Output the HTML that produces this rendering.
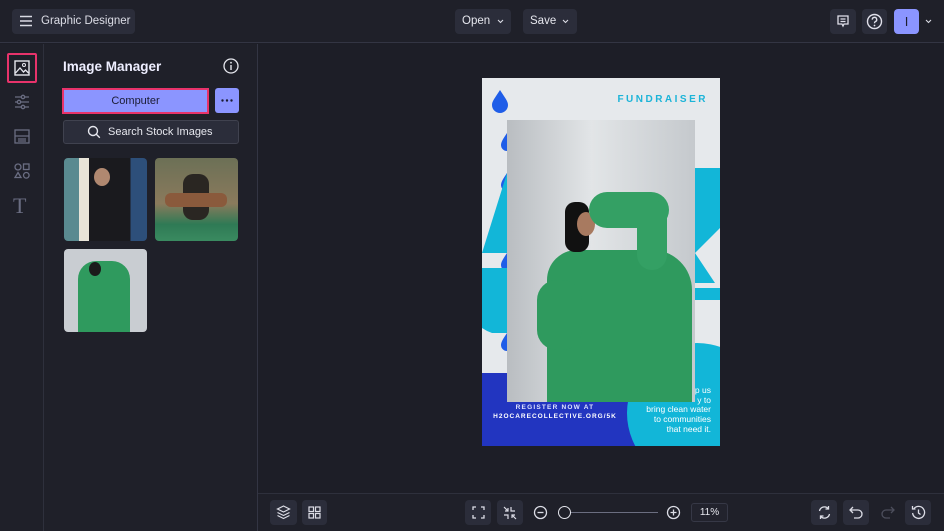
<!DOCTYPE html>
<html><head><style>
*{box-sizing:border-box;margin:0;padding:0}
body{width:944px;height:531px;background:#1d1e27;font-family:"Liberation Sans",sans-serif;color:#e6e7ee;position:relative;overflow:hidden}
.abs{position:absolute}
.btn{position:absolute;background:#2b2d3a;border-radius:4px}
.top{left:0;top:0;width:944px;height:43px;background:#1f2029;border-bottom:1px solid #333543}
.side{left:0;top:44px;width:44px;height:487px;background:#1f2029;border-right:1px solid #2e303c}
.panel{left:44px;top:44px;width:214px;height:487px;background:#1f2029;border-right:1px solid #333543}
.bottom{left:258px;top:493px;width:686px;height:38px;background:#1f2029;border-top:1px solid #2e303c}
svg{display:block}
</style></head><body>
<div class="abs top"></div>
<div class="btn" style="left:12px;top:9px;width:123px;height:25px"></div>
<svg class="abs" style="left:19px;top:15px" width="14" height="12"><path d="M1 1.5h12M1 6h12M1 10.5h12" stroke="#d9dae3" stroke-width="1.4"/></svg>
<div class="abs" style="left:41px;top:15px;font-size:11.5px;color:#dcdde6">Graphic Designer</div>
<div class="btn" style="left:455px;top:9px;width:56px;height:25px"></div>
<div class="abs" style="left:462px;top:15px;font-size:11.5px">Open</div>
<svg class="abs" style="left:497px;top:19px" width="7" height="5"><path d="M1 1l2.5 2.5L6 1" fill="none" stroke="#dcdde6" stroke-width="1.1"/></svg>
<div class="btn" style="left:523px;top:9px;width:54px;height:25px"></div>
<div class="abs" style="left:530px;top:15px;font-size:11.5px">Save</div>
<svg class="abs" style="left:562px;top:19px" width="7" height="5"><path d="M1 1l2.5 2.5L6 1" fill="none" stroke="#dcdde6" stroke-width="1.1"/></svg>
<div class="btn" style="left:830px;top:9px;width:26px;height:25px"></div>
<svg class="abs" style="left:836px;top:14px" width="14" height="14"><path d="M2 2h10v8H8l-1 2-1-2H2z M4.5 5h5M4.5 7.5h5" fill="none" stroke="#e0e0ea" stroke-width="1.3"/></svg>
<div class="btn" style="left:862px;top:9px;width:25px;height:25px"></div>
<svg class="abs" style="left:866px;top:13px" width="17" height="17"><circle cx="8.5" cy="8.5" r="7" fill="none" stroke="#e0e0ea" stroke-width="1.4"/><path d="M6.3 6.6a2.2 2.2 0 1 1 3 2c-.7.3-.8.8-.8 1.6" fill="none" stroke="#e0e0ea" stroke-width="1.4"/><circle cx="8.5" cy="12.5" r=".9" fill="#e0e0ea"/></svg>
<div class="abs" style="left:894px;top:9px;width:25px;height:25px;background:#8b95ff;border-radius:4px;color:#1d1e30;font-size:13px;text-align:center;line-height:25px">I</div>
<svg class="abs" style="left:925px;top:19px" width="7" height="5"><path d="M1 1l2.5 2.5L6 1" fill="none" stroke="#dcdde6" stroke-width="1.1"/></svg>

<div class="abs side"></div>
<div class="abs" style="left:7px;top:53px;width:30px;height:30px;border:2px solid #e8336b;border-radius:2px"></div>
<svg class="abs" style="left:14px;top:60px" width="16" height="16"><rect x="1" y="1" width="14" height="14" fill="none" stroke="#e6e7ee" stroke-width="1.4"/><circle cx="10" cy="5" r="1.5" fill="none" stroke="#e6e7ee"/><path d="M1.5 13l4.5-5 3.5 4 2-2 3 3" fill="none" stroke="#e6e7ee" stroke-width="1.3"/></svg>
<svg class="abs" style="left:14px;top:94px" width="16" height="16" stroke="#6a6d82" stroke-width="1.3" fill="none"><path d="M1 3h14M1 8h14M1 13h14"/><circle cx="9" cy="3" r="1.7" fill="#1f2029"/><circle cx="5" cy="8" r="1.7" fill="#1f2029"/><circle cx="9" cy="13" r="1.7" fill="#1f2029"/></svg>
<svg class="abs" style="left:14px;top:129px" width="16" height="15" stroke="#6a6d82" stroke-width="1.3" fill="none"><rect x="1" y="1" width="14" height="13"/><path d="M1 7h14M4 10h8M4 12h8"/></svg>
<svg class="abs" style="left:14px;top:163px" width="16" height="16" stroke="#6a6d82" stroke-width="1.3" fill="none"><circle cx="4" cy="4" r="3"/><rect x="9.5" y="1" width="5.5" height="5.5"/><path d="M4 9.5l3 5H1z"/><circle cx="12.3" cy="12.3" r="2.8"/></svg>
<div class="abs" style="left:13px;top:193px;font-family:'Liberation Serif',serif;font-size:22px;color:#6a6d82">T</div>

<div class="abs panel"></div>
<div class="abs" style="left:63px;top:59px;font-size:13.5px;font-weight:bold;color:#eef">Image Manager</div>
<svg class="abs" style="left:223px;top:58px" width="16" height="16"><circle cx="8" cy="8" r="7" fill="none" stroke="#e6e7ee" stroke-width="1.3"/><path d="M8 7v5" stroke="#e6e7ee" stroke-width="1.4"/><circle cx="8" cy="4.7" r=".9" fill="#e6e7ee"/></svg>
<div class="abs" style="left:62px;top:88px;width:147px;height:26px;background:#8b95ff;border:2px solid #e8336b;color:#1b1c33;font-size:11px;text-align:center;line-height:22px">Computer</div>
<div class="abs" style="left:215px;top:88px;width:24px;height:25px;background:#8b95ff;border-radius:3px"></div>
<svg class="abs" style="left:221px;top:99px" width="12" height="3"><circle cx="1.5" cy="1.5" r="1.2" fill="#1b1c33"/><circle cx="6" cy="1.5" r="1.2" fill="#1b1c33"/><circle cx="10.5" cy="1.5" r="1.2" fill="#1b1c33"/></svg>
<div class="abs" style="left:63px;top:120px;width:176px;height:24px;background:#2b2d3a;border:1px solid #40424f;border-radius:3px;font-size:11px;line-height:22px;padding-left:44px">Search Stock Images</div>
<svg class="abs" style="left:87px;top:125px" width="14" height="14"><circle cx="6" cy="6" r="4.5" fill="none" stroke="#e6e7ee" stroke-width="1.4"/><path d="M9.3 9.3l3.5 3.5" stroke="#e6e7ee" stroke-width="1.4"/></svg>
<div class="abs" style="left:64px;top:158px;width:83px;height:83px;border-radius:4px;background:linear-gradient(90deg,#5a8a90 0 18%,#e8e4d8 18% 30%,#1a1a1e 30% 80%,#2d4f7a 80%);overflow:hidden"><div style="position:absolute;left:30px;top:10px;width:16px;height:18px;border-radius:50%;background:#b08870"></div></div>
<div class="abs" style="left:155px;top:158px;width:83px;height:83px;border-radius:4px;background:linear-gradient(180deg,#6c7056 0,#8a7a5c 55%,#2f7a55 80%,#3a8a60);overflow:hidden"><div style="position:absolute;left:28px;top:16px;width:26px;height:46px;border-radius:10px;background:#2a2622"></div><div style="position:absolute;left:10px;top:35px;width:62px;height:14px;background:#8a5a3c;border-radius:6px"></div></div>
<div class="abs" style="left:64px;top:249px;width:83px;height:83px;border-radius:4px;background:#c9cdd2;overflow:hidden"><div style="position:absolute;left:14px;top:12px;width:52px;height:71px;background:#2f9a5e;border-radius:18px 18px 0 0"></div><div style="position:absolute;left:25px;top:13px;width:12px;height:14px;background:#1b1b1b;border-radius:50%"></div></div>

<!-- poster -->
<div class="abs" style="left:482px;top:78px;width:238px;height:368px;background:#e6e9ec;overflow:hidden">
 <svg class="abs" style="left:0;top:0" width="238" height="368">
  <path d="M18 12c-5 8-8 11-8 15a8 8 0 0 0 16 0c0-4-3-7-8-15z" fill="#1f5de8"/>
  <path d="M25 55c-4 6-6 9-6 12a6 6 0 0 0 6 6zM25 95c-4 6-6 9-6 12a6 6 0 0 0 6 6zM25 135c-4 6-6 9-6 12a6 6 0 0 0 6 6zM25 175c-4 6-6 9-6 12a6 6 0 0 0 6 6zM25 215c-4 6-6 9-6 12a6 6 0 0 0 6 6zM25 255c-4 6-6 9-6 12a6 6 0 0 0 6 6z" fill="#1f5de8"/>
  <path d="M0 175L25 95L25 175z" fill="#12b6d8"/>
  <path d="M0 190h25v65H10a40 30 0 0 1-10-5z" fill="#12b6d8"/>
  <path d="M213 90h25v60L213 175z" fill="#12b6d8"/>
  <path d="M213 175l20 30h-20zM213 210h25v12h-25z" fill="#12b6d8"/>
  <rect x="0" y="295" width="238" height="73" fill="#2235c0"/>
  <circle cx="215" cy="335" r="70" fill="#12b6d8"/>
 </svg>
 <div class="abs" style="right:12px;top:16px;font-size:10px;font-weight:bold;letter-spacing:2.5px;color:#1cb4d8">FUNDRAISER</div>
 <div class="abs" style="left:25px;top:42px;width:188px;height:282px;background:linear-gradient(90deg,#b9bdc1,#e2e5e7 45%,#c5c9cd);overflow:hidden">
  <div class="abs" style="left:40px;top:130px;width:145px;height:160px;background:#2f9a5e;border-radius:30px 40px 0 0"></div>
  <div class="abs" style="left:30px;top:160px;width:45px;height:70px;background:#2f9a5e;border-radius:20px"></div>
  <div class="abs" style="left:58px;top:82px;width:24px;height:50px;background:#111;border-radius:10px"></div>
  <div class="abs" style="left:70px;top:92px;width:18px;height:24px;background:#a87a60;border-radius:50%"></div>
  <div class="abs" style="left:82px;top:72px;width:80px;height:36px;background:#34a064;border-radius:20px"></div>
  <div class="abs" style="left:130px;top:80px;width:30px;height:70px;background:#34a064;border-radius:15px"></div>
 </div>
 <div class="abs" style="left:0;width:146px;top:326px;text-align:center;font-size:6.5px;letter-spacing:1.2px;color:#dfe3ff;font-weight:bold">REGISTER NOW AT</div>
 <div class="abs" style="left:0;width:146px;top:335px;text-align:center;font-size:6.5px;letter-spacing:1px;color:#fff;font-weight:bold">H2OCARECOLLECTIVE.ORG/5K</div>
 <div class="abs" style="right:9px;top:326px;text-align:right;font-size:8.5px;line-height:10px;color:#fff">bring clean water<br>to communities<br>that need it.</div>
 <div class="abs" style="right:9px;top:307px;text-align:right;font-size:8.5px;line-height:10px;color:#fff">p us<br>y to</div>
</div>

<div class="abs bottom"></div>
<div class="btn" style="left:270px;top:500px;width:27px;height:25px"></div>
<svg class="abs" style="left:276px;top:505px" width="15" height="15" fill="none" stroke="#dcdde6" stroke-width="1.2"><path d="M7.5 1l6 3-6 3-6-3z M1.5 7.5l6 3 6-3 M1.5 10.5l6 3 6-3"/></svg>
<div class="btn" style="left:302px;top:500px;width:25px;height:25px"></div>
<svg class="abs" style="left:308px;top:506px" width="13" height="13" fill="none" stroke="#dcdde6" stroke-width="1.2"><rect x="1" y="1" width="4.5" height="4.5"/><rect x="7.5" y="1" width="4.5" height="4.5"/><rect x="1" y="7.5" width="4.5" height="4.5"/><rect x="7.5" y="7.5" width="4.5" height="4.5"/></svg>
<div class="btn" style="left:465px;top:500px;width:26px;height:25px"></div>
<svg class="abs" style="left:472px;top:506px" width="13" height="13" fill="none" stroke="#dcdde6" stroke-width="1.3"><path d="M1 4V1h3M9 1h3v3M12 9v3H9M4 12H1V9"/></svg>
<div class="btn" style="left:497px;top:500px;width:26px;height:25px"></div>
<svg class="abs" style="left:503px;top:506px" width="14" height="14" fill="none" stroke="#dcdde6" stroke-width="1.2"><path d="M1 1l4 4M5 2v3H2M13 13l-4-4M9 12V9h3M8 1v4h4M1 9h4v4"/></svg>
<svg class="abs" style="left:533px;top:505px" width="15" height="15" fill="none" stroke="#dcdde6" stroke-width="1.3"><circle cx="7.5" cy="7.5" r="6"/><path d="M4.5 7.5h6"/></svg>
<div class="abs" style="left:570px;top:512px;width:88px;height:1px;background:#6b6e80"></div>
<div class="abs" style="left:558px;top:506px;width:13px;height:13px;border-radius:50%;border:1.5px solid #e6e7ee;background:#1f2029"></div>
<svg class="abs" style="left:666px;top:505px" width="15" height="15" fill="none" stroke="#dcdde6" stroke-width="1.3"><circle cx="7.5" cy="7.5" r="6"/><path d="M4.5 7.5h6M7.5 4.5v6"/></svg>
<div class="abs" style="left:691px;top:503px;width:37px;height:19px;border:1px solid #363846;border-radius:3px;background:#22232d;font-size:10px;text-align:center;line-height:17px">11%</div>
<div class="btn" style="left:811px;top:500px;width:26px;height:25px"></div>
<svg class="abs" style="left:817px;top:505px" width="15" height="15" fill="none" stroke="#dcdde6" stroke-width="1.3"><path d="M2.5 6a5 5 0 0 1 9-2M12.5 9a5 5 0 0 1-9 2M11.5 1v3h-3M3.5 14v-3h3"/></svg>
<div class="btn" style="left:843px;top:500px;width:26px;height:25px"></div>
<svg class="abs" style="left:849px;top:506px" width="15" height="13" fill="none" stroke="#dcdde6" stroke-width="1.3"><path d="M4 1L1 4l3 3M1 4h8a4 4 0 0 1 0 8H5"/></svg>
<svg class="abs" style="left:880px;top:506px" width="15" height="13" fill="none" stroke="#4c4e5c" stroke-width="1.3"><path d="M11 1l3 3-3 3M14 4H6a4 4 0 0 0 0 8h4"/></svg>
<div class="btn" style="left:905px;top:500px;width:26px;height:25px"></div>
<svg class="abs" style="left:911px;top:505px" width="15" height="15" fill="none" stroke="#dcdde6" stroke-width="1.3"><path d="M3 3.5A6 6 0 1 1 1.6 8M1.5 1v3h3M7.5 4.5v3.5l2 1.5"/></svg>
</body></html>
